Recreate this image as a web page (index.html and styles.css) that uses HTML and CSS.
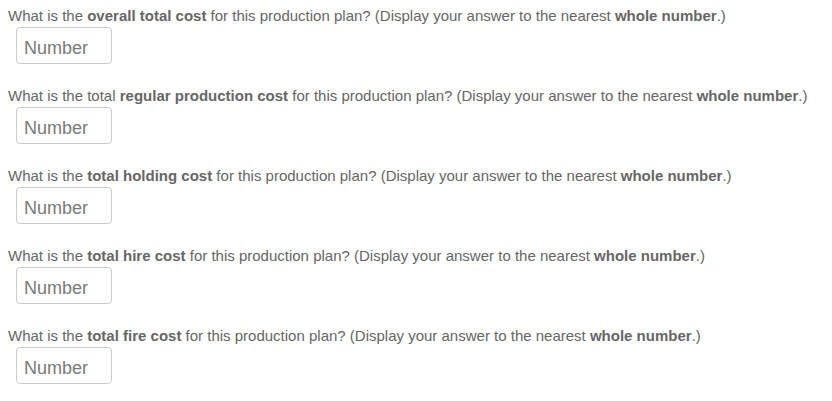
FILE: index.html
```html
<!DOCTYPE html>
<html>
<head>
<meta charset="utf-8">
<link rel="stylesheet" href="styles.css">
</head>
<body>
<div class="questions">
  <div class="q">
    <div class="prompt">What is the <b>overall total cost</b> for this production plan? (Display your answer to the nearest <b>whole number</b>.)</div>
    <input class="num" type="text" placeholder="Number">
  </div>
  <div class="q">
    <div class="prompt">What is the total <b>regular production cost</b> for this production plan? (Display your answer to the nearest <b>whole number</b>.)</div>
    <input class="num" type="text" placeholder="Number">
  </div>
  <div class="q">
    <div class="prompt">What is the <b>total holding cost</b> for this production plan? (Display your answer to the nearest <b>whole number</b>.)</div>
    <input class="num" type="text" placeholder="Number">
  </div>
  <div class="q">
    <div class="prompt">What is the <b>total hire cost</b> for this production plan? (Display your answer to the nearest <b>whole number</b>.)</div>
    <input class="num" type="text" placeholder="Number">
  </div>
  <div class="q">
    <div class="prompt">What is the <b>total fire cost</b> for this production plan? (Display your answer to the nearest <b>whole number</b>.)</div>
    <input class="num" type="text" placeholder="Number">
  </div>
</div>
</body>
</html>
```
FILE: styles.css
```css
html, body {
  margin: 0;
  padding: 0;
  background: #fff;
}
body {
  font-family: "Liberation Sans", Arial, sans-serif;
  color: #666;
}
.questions {
  display: flex;
  flex-direction: column;
  gap: 23px;
  padding: 7px 0 0 8px;
}
.q {
  display: flex;
  flex-direction: column;
  align-items: flex-start;
  gap: 2px;
}
.prompt {
  font-size: 15px;
  line-height: 18px;
}
.num {
  box-sizing: border-box;
  width: 96px;
  height: 37px;
  margin-left: 8px;
  border: 1px solid #ccc;
  border-radius: 4px;
  padding: 5px 7px 0;
  font-family: "Liberation Sans", Arial, sans-serif;
  font-size: 18px;
  color: #666;
  background: #fff;
  outline: none;
}
.num::placeholder {
  color: #7a7a7a;
}
```
